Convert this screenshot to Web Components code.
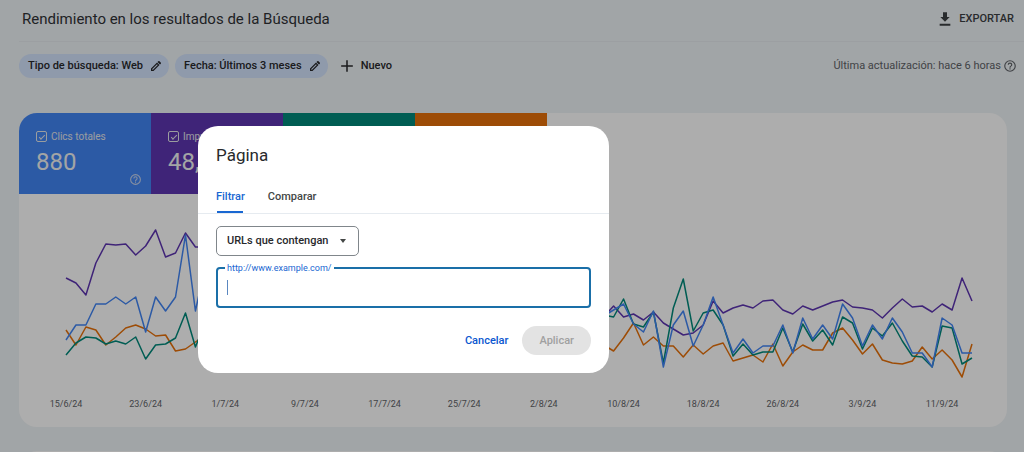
<!DOCTYPE html>
<html lang="es">
<head>
<meta charset="utf-8">
<meta name="viewport" content="width=device-width, initial-scale=1">
<title>Rendimiento</title>
<style>
  html { overflow: hidden; }
  body { margin: 0; background: #eef3f6; color: #3c4043; font: 11px/16px Roboto, "Liberation Sans", sans-serif; }
</style>
</head>
<body>
<performance-page></performance-page>
<script>
const define = (name, html, setup) => {
  const template = document.createElement('template');
  template.innerHTML = html;
  customElements.define(name, class extends HTMLElement {
    connectedCallback() {
      if (this.shadowRoot) return;
      this.attachShadow({ mode: 'open' }).append(template.content.cloneNode(true));
      if (setup) setup.call(this, this.shadowRoot);
    }
  });
};

const icons = {
  edit: '<path fill-rule="evenodd" d="M2 17V22h5L19 10 14 5zM21.500 7.500a1.800 1.800 0 0 0 0-2.500L19 2.500a1.800 1.800 0 0 0-2.500 0L15 4 20 9zM6 19.500H4.500V18l9.500-9.500 1.500 1.500z"/>',
  plus: '<path d="M10.700 2h2.600v8.700H22v2.600h-8.700V22h-2.600v-8.700H2v-2.600h8.700z"/>',
  download: '<path d="M19 9h-4V2H9v7H5l7 7zM4 19v3h16v-3z"/>',
  help: '<path d="M11 18h2v-2h-2zm1-16a10 10 0 1 0 0 20 10 10 0 0 0 0-20zm0 18a8 8 0 1 1 0-16 8 8 0 0 1 0 16zm0-14a4 4 0 0 0-4 4h2a2 2 0 1 1 4 0c0 2-3 1.750-3 5h2c0-2.250 3-2.500 3-5a4 4 0 0 0-4-4z"/>'
};
define('ui-icon', `
  <style>
    :host { display: block; flex: none; width: 14px; height: 14px; }
    svg { display: block; width: 100%; height: 100%; fill: currentColor; }
  </style>
  <svg viewBox="0 0 24 24" aria-hidden="true"></svg>`,
  function (root) { root.querySelector('svg').innerHTML = icons[this.getAttribute('name')]; });

define('filter-chip', `
  <style>
    :host { display: block; }
    button { display: flex; align-items: center; gap: 7px; height: 24px; padding: 0 7px 0 9px; border: 0;
      border-radius: 12px; background: #d3e3fd; color: #28292c; font: inherit; font-weight: 500; }
    ui-icon { width: 12px; height: 12px; }
  </style>
  <button type="button"><slot></slot><ui-icon name="edit"></ui-icon></button>`);

define('page-header', `
  <style>
    :host { display: flex; align-items: center; justify-content: space-between; height: 42px; box-sizing: border-box;
      margin-left: 19px; padding: 0 10px 3px 3px; border-bottom: 1px solid #e6ebef; }
    h1 { margin: 0; font-size: 15px; line-height: 20px; font-weight: 400; color: #303236; }
    button { display: flex; align-items: center; gap: 6px; padding: 0; border: 0; background: none; color: #3c4043;
      font: inherit; font-weight: 500; }
    ui-icon { width: 16px; height: 16px; }
  </style>
  <h1><slot></slot></h1>
  <button type="button"><ui-icon name="download"></ui-icon>EXPORTAR</button>`);

define('filter-bar', `
  <style>
    :host { display: flex; align-items: center; gap: 6px; padding: 12px 7px 0 19px; }
    .new { display: flex; align-items: center; gap: 7px; margin-left: 6px; padding: 0; border: 0; background: none;
      color: #28292c; font: inherit; font-weight: 500; }
    .updated { display: flex; align-items: center; gap: 2px; margin-left: auto; color: #5f6368; }
  </style>
  <filter-chip>Tipo de búsqueda: Web</filter-chip>
  <filter-chip>Fecha: Últimos 3 meses</filter-chip>
  <button class="new" type="button"><ui-icon name="plus"></ui-icon>Nuevo</button>
  <div class="updated">Última actualización: hace 6 horas<ui-icon name="help"></ui-icon></div>`);

define('metric-tile', `
  <style>
    :host { display: block; box-sizing: border-box; height: 81px; padding: 15px 9px 7px 17px; color: #e4e7eb; }
    label { display: flex; align-items: center; gap: 4px; font-size: 10px; line-height: 17px; white-space: nowrap; }
    input { appearance: none; display: grid; place-items: center; box-sizing: border-box; width: 11px; height: 11px; margin: 0;
      border: 1px solid currentColor; border-radius: 2px; color: inherit; }
    input::before { content: ""; width: 5px; height: 2px; border: solid currentColor; border-width: 0 0 1px 1px; transform: rotate(-45deg); }
    .row { display: flex; justify-content: space-between; align-items: flex-end; }
    .value { display: block; font-size: 24px; line-height: 35px; color: #f1f3f4; }
    ui-icon { width: 13px; height: 13px; margin-bottom: -6px; color: #c8d5ee; }
  </style>
  <label><input type="checkbox" checked><slot></slot></label>
  <div class="row"><slot class="value" name="value"></slot><ui-icon name="help"></ui-icon></div>`);

/* Each series is a list of runs: first day of the run, then one height per day. */
const series = {
  '#e8710a': [[0, 330,345,327,330,345,337,328,325,329,336,335,351,349,342,335],
    [54, 345,351,338,323,345,337,346,346,357,345,354,346,343,361,358,355,362,344,366,352,345,350,350,333,328,340,354,344,360,363,364,361,347,359,350,360,377,344]],
  '#5e35b1': [[0, 278,283,295,263,244,245,244,255,246,230,257,253,233,247,247],
    [54, 317,306,317,314,320,312,323,329,335,333,325,301,313,308,305,308,301,300,310,314,306,310,306,302,300,307,308,310,318,308,299,307,306,312,304,310,278,301]],
  '#00897b': [[0, 355,343,337,338,344,341,344,337,359,345,344,338,313,347,322],
    [54, 315,317,299,324,327,312,363,308,279,331,313,310,325,356,344,355,352,352,328,352,324,341,330,345,317,323,349,328,336,323,341,356,357,367,326,328,364,358]],
  '#4285f4': [[0, 340,325,325,304,304,297,304,297,332,297,311,297,235,311,265],
    [54, 316,310,304,324,332,311,367,325,311,346,325,297,325,353,339,353,346,346,325,353,318,339,325,339,304,318,346,325,339,318,332,353,353,367,318,325,353,353]]
};
define('trend-chart', `
  <style>
    :host { display: block; padding: 26px 35px 0 47px; }
    svg { display: block; width: 100%; height: 170px; overflow: visible; }
    path { fill: none; stroke-width: 1.500; stroke-linejoin: round; vector-effect: non-scaling-stroke; }
    ol { display: grid; width: 100%; grid-template-columns: repeat(12, calc(100% * 8 / 91)); margin: 6px 0 0 calc(100% * -4 / 91);
      padding: 0; list-style: none; text-align: center; font-size: 9px; line-height: 16px; color: #5f6368; }
  </style>
  <svg viewBox="0 220 91 170" preserveAspectRatio="none" role="img" aria-label="Tendencia diaria"></svg>
  <ol><li>15/6/24<li>23/6/24<li>1/7/24<li>9/7/24<li>17/7/24<li>25/7/24<li>2/8/24<li>10/8/24<li>18/8/24<li>26/8/24<li>3/9/24<li>11/9/24</ol>`,
  function (root) {
    root.querySelector('svg').innerHTML = Object.entries(series).map(([color, runs]) =>
      `<path stroke="${color}" d="${runs.map(([start, ...ys]) =>
        'M' + ys.map((y, i) => `${start + i} ${y}`).join('L')).join('')}"/>`).join('');
  });

define('report-card', `
  <style>
    :host { display: block; margin: 35px 17px 0 19px; padding-bottom: 15px; border-radius: 18px; background: #fff; overflow: hidden; }
    .tiles { display: grid; grid-template-columns: repeat(4, 132px); }
    .clicks { background: #4285f4; } .prints { background: #5e35b1; } .ctr { background: #00897b; } .rank { background: #e8710a; }
  </style>
  <div class="tiles">
    <metric-tile class="clicks">Clics totales<span slot="value">880</span></metric-tile>
    <metric-tile class="prints">Impresiones<span slot="value">48,</span></metric-tile>
    <div class="ctr"></div><div class="rank"></div>
  </div>
  <trend-chart></trend-chart>`);

define('filter-dialog', `
  <style>
    :host { position: fixed; inset: 0; display: grid; place-items: center; padding: 46px 217px 0 0;
      box-sizing: border-box; background: rgba(0, 0, 0, .32); }
    [role=dialog] { width: 411px; max-width: 100%; border-radius: 20px; background: #fff; color: #28292c; }
    h2 { margin: 0; padding: 17px 18px 0; font-size: 17px; line-height: 24px; font-weight: 400; }
    [role=tablist] { display: flex; gap: 23px; padding: 15px 18px 0; border-bottom: 1px solid #e6ebf0; }
    [role=tab] { height: 31px; padding: 0; border: 0; background: none; color: #444746; font: inherit; font-weight: 500; }
    [aria-selected=true] { color: #1967d2; background: linear-gradient(#1967d2, #1967d2) center bottom / 26px 2px no-repeat; }
    form { display: grid; justify-items: start; padding: 12px 18px 18px; }
    .match { position: relative; width: 143px; }
    select { appearance: none; width: 100%; height: 30px; padding: 0 10px; border: 1px solid #80868b; border-radius: 5px;
      background: #fff; color: #28292c; font: inherit; font-weight: 500; }
    .match::after { content: ""; position: absolute; right: 13px; top: 13px; border: solid transparent; border-width: 4px 3px 0;
      border-top-color: #444746; pointer-events: none; }
    .url { position: relative; width: 100%; margin-top: 11px; }
    .url label { position: absolute; left: 9px; top: -6px; padding: 0 2px; background: #fff; color: #1967d2; font-size: 9px; line-height: 15px; }
    .url input { display: block; box-sizing: border-box; width: 100%; height: 41px; padding: 0 9px; border: 2px solid #1a6fa8;
      border-radius: 4px; outline: 0; font: inherit; caret-color: transparent;
      background: linear-gradient(#5a87c0, #5a87c0) 9px center / 1px 15px no-repeat #fff; }
    .actions { display: flex; justify-self: end; gap: 14px; margin-top: 18px; }
    .actions button { height: 29px; padding: 1px 0 0; border: 0; border-radius: 15px; background: none; color: #0b57d0; font: inherit; font-weight: 500; }
    .actions button:disabled { padding: 1px 17px 0; background: #e3e3e3; color: #a0a0a0; }
  </style>
  <div role="dialog" aria-modal="true" aria-labelledby="title">
    <h2 id="title">Página</h2>
    <div role="tablist">
      <button role="tab" aria-selected="true">Filtrar</button>
      <button role="tab" aria-selected="false">Comparar</button>
    </div>
    <form>
      <div class="match"><select aria-label="Condición"><option>URLs que contengan</option></select></div>
      <div class="url"><input id="url" type="text" autocomplete="off"><label for="url">http://www.example.com/</label></div>
      <div class="actions"><button type="button">Cancelar</button><button type="submit" disabled>Aplicar</button></div>
    </form>
  </div>`);

define('performance-page', `
  <style>
    :host { display: block; height: 100vh; overflow: hidden; }
    .next { height: 24px; margin: 24px 17px 0 19px; border-radius: 18px 18px 0 0; background: #fff; }
  </style>
  <page-header>Rendimiento en los resultados de la Búsqueda</page-header>
  <filter-bar></filter-bar>
  <report-card></report-card>
  <section class="next"></section>
  <filter-dialog></filter-dialog>`);
</script>
</body>
</html>
